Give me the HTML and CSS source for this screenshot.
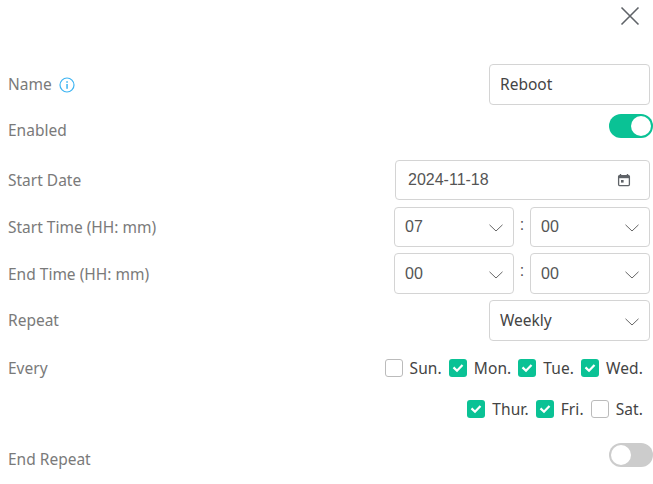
FILE: index.html
```html
<!DOCTYPE html>
<html>
<head>
  <title>Schedule</title>
  <link rel="stylesheet" href="styles.css">
</head>
<body>
  <div class="panel">
    <div class="panel-head">
      <button class="close" aria-label="Close">
        <svg width="20" height="20" viewBox="0 0 20 20"><path d="M1.5 1.5L18.5 18.5M18.5 1.5L1.5 18.5" stroke="#5f6368" stroke-width="1.6" fill="none"/></svg>
      </button>
    </div>

    <div class="row row-name">
      <label class="label">Name
        <svg class="info" width="16" height="16" viewBox="0 0 16 16"><circle cx="8" cy="8" r="7" stroke="#3db4f2" stroke-width="1.2" fill="none"/><rect x="7.3" y="7" width="1.5" height="4.8" fill="#3db4f2"/><rect x="7.3" y="4.2" width="1.5" height="1.6" fill="#3db4f2"/></svg>
      </label>
      <input class="field field-short" type="text" value="Reboot">
    </div>

    <div class="row row-enabled">
      <label class="label">Enabled</label>
      <span class="switch on"><span class="knob"></span></span>
    </div>

    <div class="row row-date">
      <label class="label">Start Date</label>
      <div class="date">
        <span>2024-11-18</span>
        <svg width="14" height="14" viewBox="0 0 14 14"><path d="M3.5 1v2M10.5 1v2" stroke="#5f6368" stroke-width="1.4"/><rect x="1.6" y="2.6" width="10.8" height="10" rx="1" stroke="#5f6368" stroke-width="1.3" fill="none"/><rect x="1.6" y="2.6" width="10.8" height="2.6" fill="#5f6368"/><rect x="4" y="7" width="2.6" height="2.6" fill="#5f6368"/></svg>
      </div>
    </div>

    <div class="row row-time">
      <label class="label">Start Time (HH: mm)</label>
      <div class="time">
        <div class="select"><span>07</span><svg class="chev" width="14" height="8" viewBox="0 0 14 8"><path d="M.5 .8L7 7L13.5 .8" stroke="#666" fill="none"/></svg></div>
        <span class="colon">:</span>
        <div class="select"><span>00</span><svg class="chev" width="14" height="8" viewBox="0 0 14 8"><path d="M.5 .8L7 7L13.5 .8" stroke="#666" fill="none"/></svg></div>
      </div>
    </div>

    <div class="row row-time">
      <label class="label">End Time (HH: mm)</label>
      <div class="time">
        <div class="select"><span>00</span><svg class="chev" width="14" height="8" viewBox="0 0 14 8"><path d="M.5 .8L7 7L13.5 .8" stroke="#666" fill="none"/></svg></div>
        <span class="colon">:</span>
        <div class="select"><span>00</span><svg class="chev" width="14" height="8" viewBox="0 0 14 8"><path d="M.5 .8L7 7L13.5 .8" stroke="#666" fill="none"/></svg></div>
      </div>
    </div>

    <div class="row row-repeat">
      <label class="label">Repeat</label>
      <div class="select select-wide"><span>Weekly</span><svg class="chev" width="14" height="8" viewBox="0 0 14 8"><path d="M.5 .8L7 7L13.5 .8" stroke="#666" fill="none"/></svg></div>
    </div>

    <div class="row row-every">
      <label class="label">Every</label>
      <div class="days">
        <span class="day"><span class="check"></span>Sun.</span>
        <span class="day"><span class="check on"><svg width="14" height="12" viewBox="0 0 14 12"><path d="M2.5 5.4L6 8.8L11.5 3" stroke="#fff" stroke-width="2.2" fill="none"/></svg></span>Mon.</span>
        <span class="day"><span class="check on"><svg width="14" height="12" viewBox="0 0 14 12"><path d="M2.5 5.4L6 8.8L11.5 3" stroke="#fff" stroke-width="2.2" fill="none"/></svg></span>Tue.</span>
        <span class="day"><span class="check on"><svg width="14" height="12" viewBox="0 0 14 12"><path d="M2.5 5.4L6 8.8L11.5 3" stroke="#fff" stroke-width="2.2" fill="none"/></svg></span>Wed.</span>
      </div>
    </div>

    <div class="row row-every2">
      <div class="days">
        <span class="day"><span class="check on"><svg width="14" height="12" viewBox="0 0 14 12"><path d="M2.5 5.4L6 8.8L11.5 3" stroke="#fff" stroke-width="2.2" fill="none"/></svg></span>Thur.</span>
        <span class="day"><span class="check on"><svg width="14" height="12" viewBox="0 0 14 12"><path d="M2.5 5.4L6 8.8L11.5 3" stroke="#fff" stroke-width="2.2" fill="none"/></svg></span>Fri.</span>
        <span class="day"><span class="check"></span>Sat.</span>
      </div>
    </div>

    <div class="row row-end">
      <label class="label">End Repeat</label>
      <span class="switch"><span class="knob"></span></span>
    </div>
  </div>
</body>
</html>
```

FILE: styles.css
```css
body{
  margin: 0;
  background-color: white;
  font-family: "Noto Sans", sans-serif;
  font-size: 15.5px;
  overflow: hidden;
}

.panel{
  width: 653px;
  height: 484px;
  box-sizing: border-box;
  padding-left: 8px;
}

.panel-head{
  display: flex;
  justify-content: flex-end;
  height: 64px;
  padding: 6px 13px 0 0;
  box-sizing: border-box;
}

.close{
  border: none;
  background: none;
  padding: 0;
  width: 20px;
  height: 20px;
  cursor: pointer;
}

.row{
  display: flex;
  justify-content: space-between;
  align-items: center;
}

.label{
  color: #7a7a7a;
  display: flex;
  align-items: center;
}

.info{
  margin-left: 7px;
  margin-top: 2px;
}

.field,
.date,
.select{
  box-sizing: border-box;
  border: 1px solid #d4d4d4;
  border-radius: 4px;
  background-color: white;
}

.field{
  font-family: "Noto Sans", sans-serif;
  font-size: 15.5px;
  color: #444;
  padding: 0 10px 2px;
  outline: none;
}

.field-short{
  width: 161px;
  height: 41px;
  margin-right: 3px;
}

.switch{
  display: flex;
  align-items: center;
  width: 44px;
  height: 24px;
  border-radius: 12px;
  background-color: #ccc;
  padding: 0 2px;
  box-sizing: border-box;
}

.switch.on{
  background-color: #0ac295;
  justify-content: flex-end;
}

.knob{
  width: 20px;
  height: 20px;
  border-radius: 50%;
  background-color: white;
}

.row-name{
  height: 41px;
}

.row-name .label{
  margin-top: -2px;
}

.row-enabled{
  height: 50px;
}

.row-enabled .switch{
  margin-bottom: 8px;
}

.row-date{
  height: 40px;
  margin-top: 5px;
}

.date{
  display: flex;
  justify-content: space-between;
  align-items: center;
  width: 255px;
  height: 40px;
  margin-right: 3px;
  padding: 0 18px 0 12px;
  font-family: "Liberation Sans", sans-serif;
  font-size: 16px;
  color: #555;
}

.row-time{
  height: 40px;
  margin-top: 7px;
}

.row-time + .row-time{
  height: 41px;
  margin-top: 6px;
}

.time{
  display: flex;
  align-self: stretch;
  margin-right: 3px;
}

.select{
  display: flex;
  justify-content: space-between;
  align-items: center;
  width: 120px;
  padding: 0 10px;
  font-family: "Liberation Sans", sans-serif;
  font-size: 16px;
  color: #555;
}

.chev{
  margin-top: 2px;
}

.colon{
  width: 16px;
  text-align: center;
  color: #555;
  font-family: "Liberation Sans", sans-serif;
  font-size: 16px;
  line-height: 36px;
}

.select-wide{
  width: 161px;
  height: 41px;
  margin-right: 3px;
  font-family: "Noto Sans", sans-serif;
  font-size: 15.5px;
  color: #444;
}

.select-wide span{
  margin-top: -2px;
}

.row-repeat{
  height: 41px;
  margin-top: 6px;
}

.row-repeat .label{
  margin-top: -2px;
}

.days{
  display: flex;
  margin-left: auto;
  margin-right: 10px;
  gap: 7px;
}

.day{
  display: flex;
  align-items: center;
  color: #444;
  line-height: 20px;
  letter-spacing: 0.1px;
}

.check{
  box-sizing: border-box;
  width: 18px;
  height: 18px;
  border: 1px solid #bbb;
  border-radius: 3px;
  margin-right: 7px;
  display: flex;
  align-items: center;
  justify-content: center;
}

.check.on{
  border: none;
  background-color: #0ac295;
}

.row-every{
  height: 20px;
  margin-top: 17px;
}

.row-every2{
  height: 20px;
  margin-top: 21px;
}

.row-end{
  height: 24px;
  margin-top: 24px;
}

.row-end .label{
  margin-top: 8px;
}
```
